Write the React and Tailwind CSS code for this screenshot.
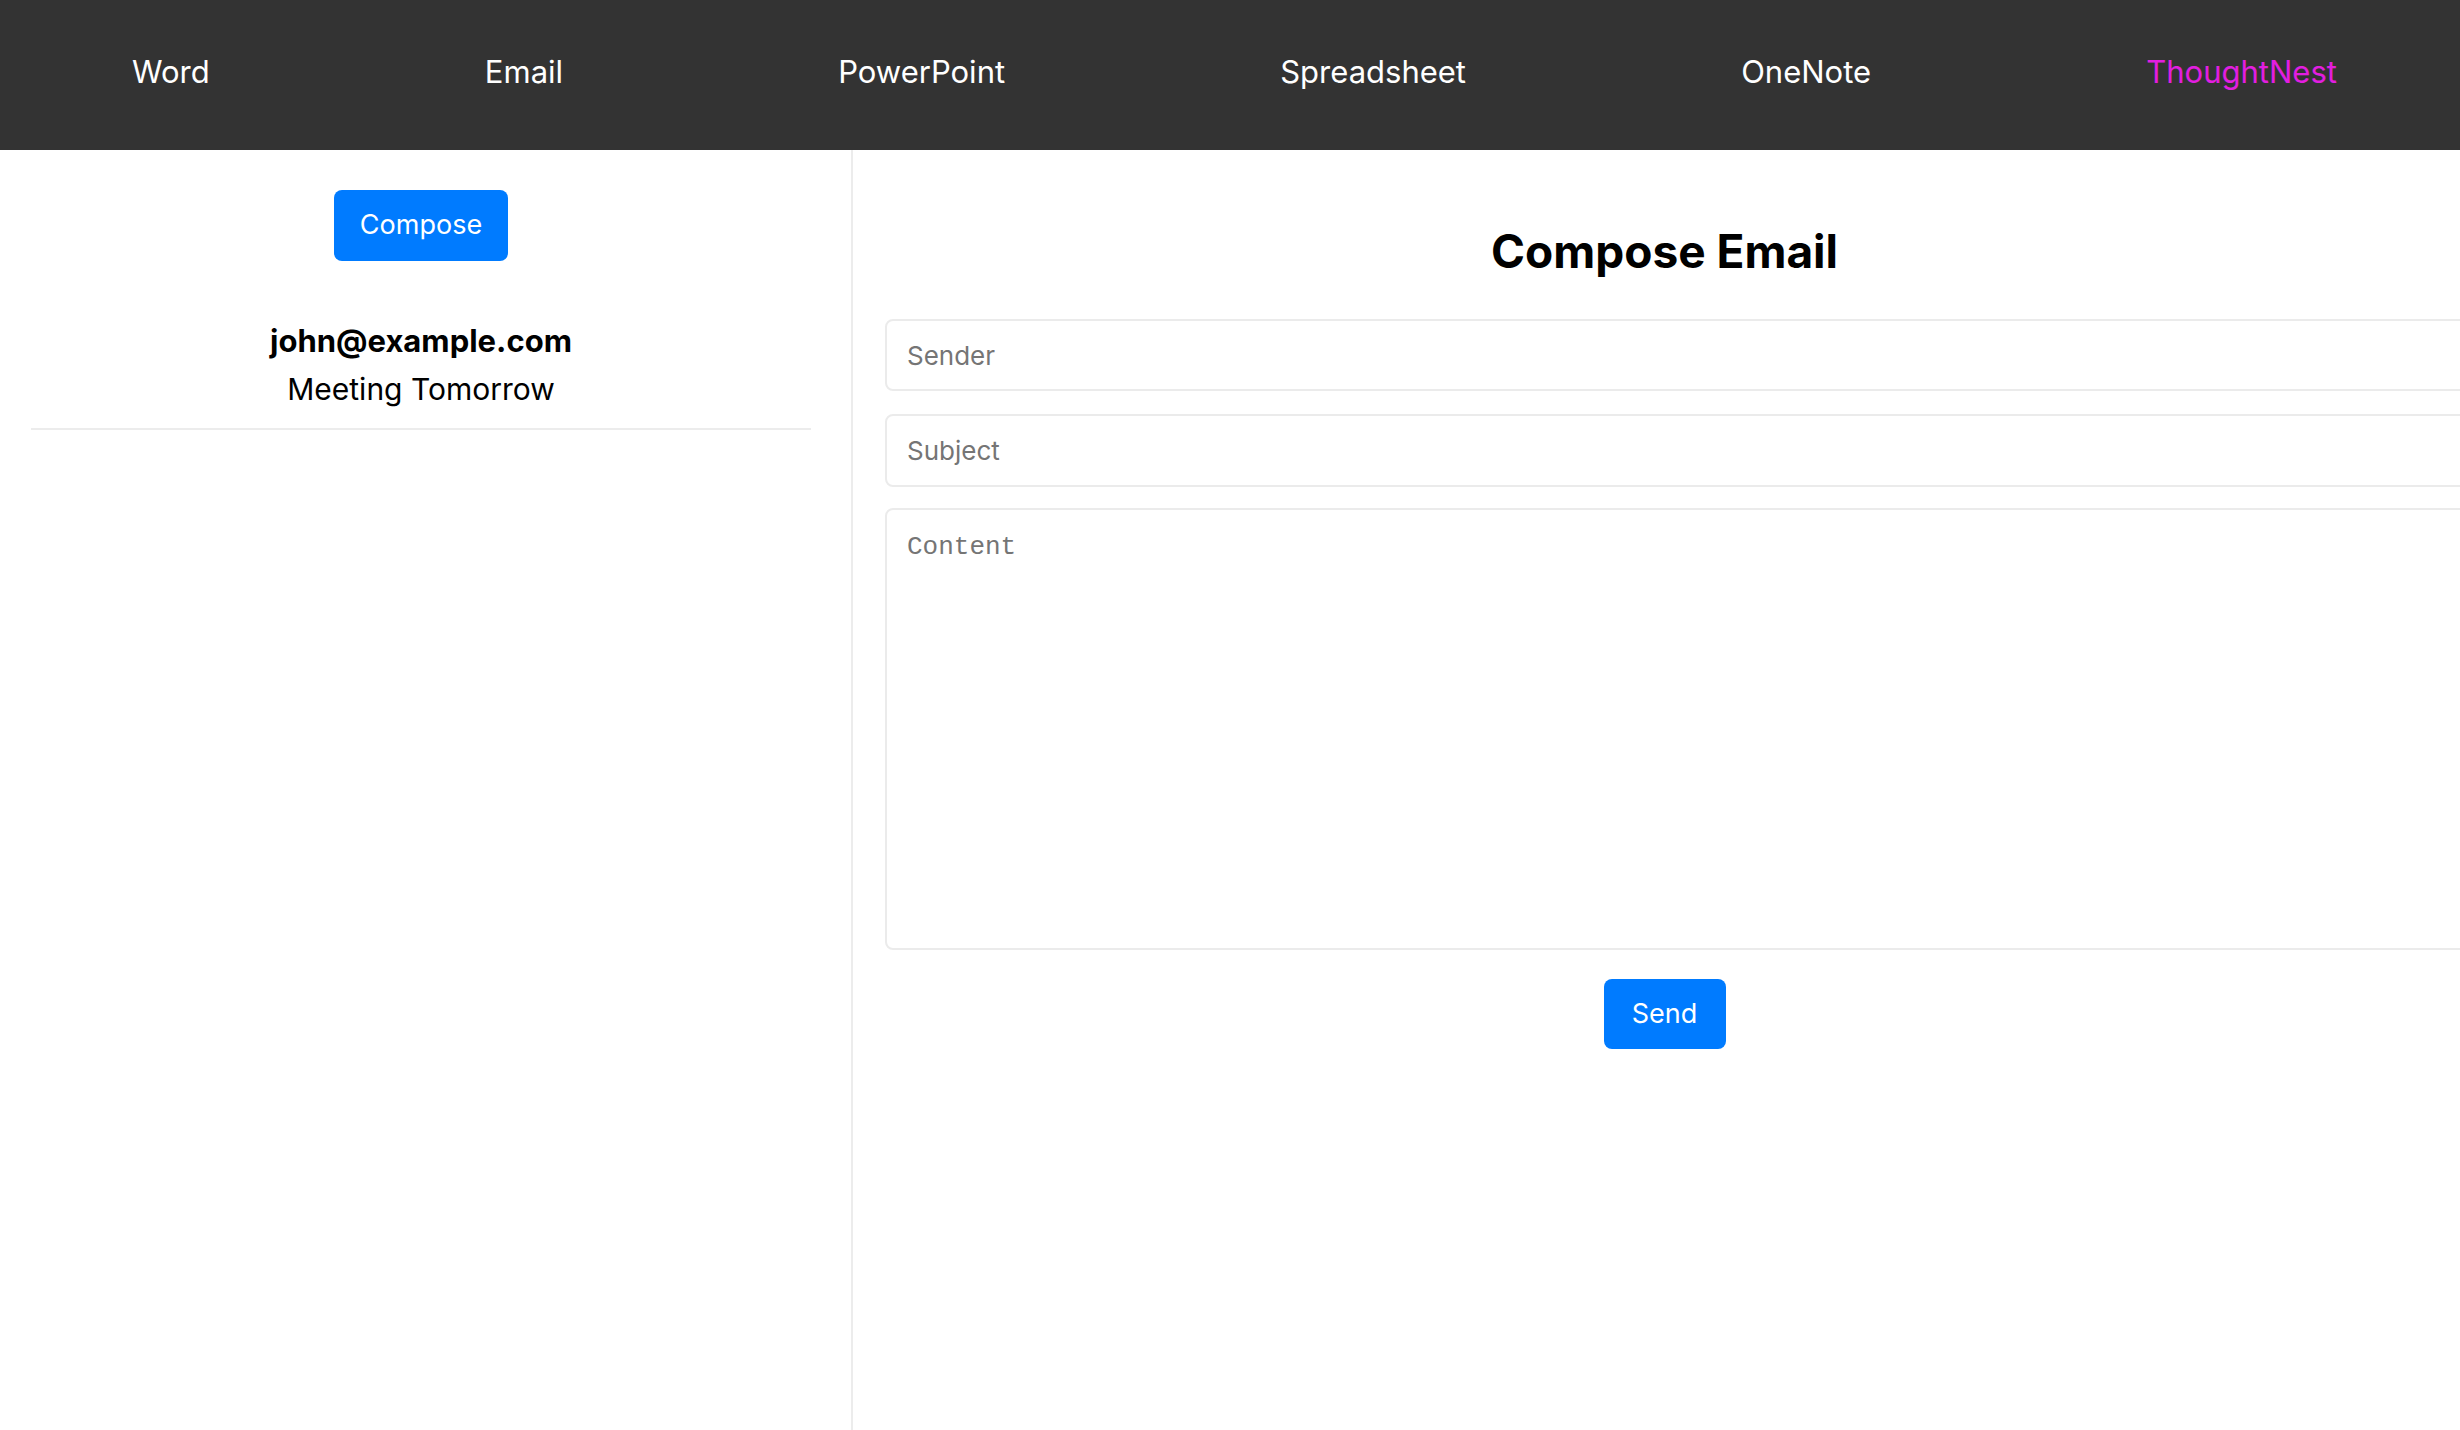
import React from "react";

export default function App() {
  const navItems = ["Word", "Email", "PowerPoint", "Spreadsheet", "OneNote", "ThoughtNest"];
  return (
    <div className="w-[2460px] h-[1430px] overflow-hidden bg-white flex flex-col font-['Inter',sans-serif] text-black">
      <nav className="h-[150px] shrink-0 bg-[#333333] flex items-center justify-between pl-[132px] pr-[123px] pb-[6px]">
        {navItems.map((n) => (
          <a
            key={n}
            className={`text-[31px] leading-[38px] ${n === "ThoughtNest" ? "text-[#e21ee0]" : "text-white"}`}
          >
            {n}
          </a>
        ))}
      </nav>
      <div className="flex flex-1 min-h-0">
        <aside className="w-[853px] shrink-0 border-r-2 border-[#ececec] pl-[31px] pr-[40px] pt-[40px]">
          <div className="flex justify-center">
            <button className="w-[174px] h-[71px] rounded-[8px] bg-[#007bff] text-white text-[27px]">
              Compose
            </button>
          </div>
          <div className="mt-[61px] border-b-2 border-[#ececec] pb-[20px] flex flex-col items-center">
            <div className="text-[31px] leading-[38px] font-bold">john@example.com</div>
            <div className="text-[30px] leading-[38px] mt-[10px]">Meeting Tomorrow</div>
          </div>
        </aside>
        <main className="flex-1 min-w-0 pl-[32px] pt-[73px]">
          <div className="w-[1559px]">
            <h2 className="text-[46px] leading-[56px] font-bold text-center">Compose Email</h2>
            <input
              placeholder="Sender"
              className="mt-[40px] block w-[1603px] h-[72px] border-2 border-[#ebebeb] rounded-[8px] px-[20px] text-[26px] placeholder:text-[#757575] outline-none"
            />
            <input
              placeholder="Subject"
              className="mt-[23px] block w-[1603px] h-[73px] border-2 border-[#ebebeb] rounded-[8px] px-[20px] text-[26px] placeholder:text-[#757575] outline-none"
            />
            <textarea
              placeholder="Content"
              className="mt-[21px] block w-[1603px] h-[442px] border-2 border-[#ebebeb] rounded-[8px] px-[20px] py-[18px] text-[26px] font-['Liberation_Mono',monospace] placeholder:text-[#757575] outline-none resize-none"
            />
            <div className="flex justify-center mt-[29px]">
              <button className="w-[122px] h-[70px] rounded-[8px] bg-[#007bff] text-white text-[27px]">
                Send
              </button>
            </div>
          </div>
        </main>
      </div>
    </div>
  );
}
